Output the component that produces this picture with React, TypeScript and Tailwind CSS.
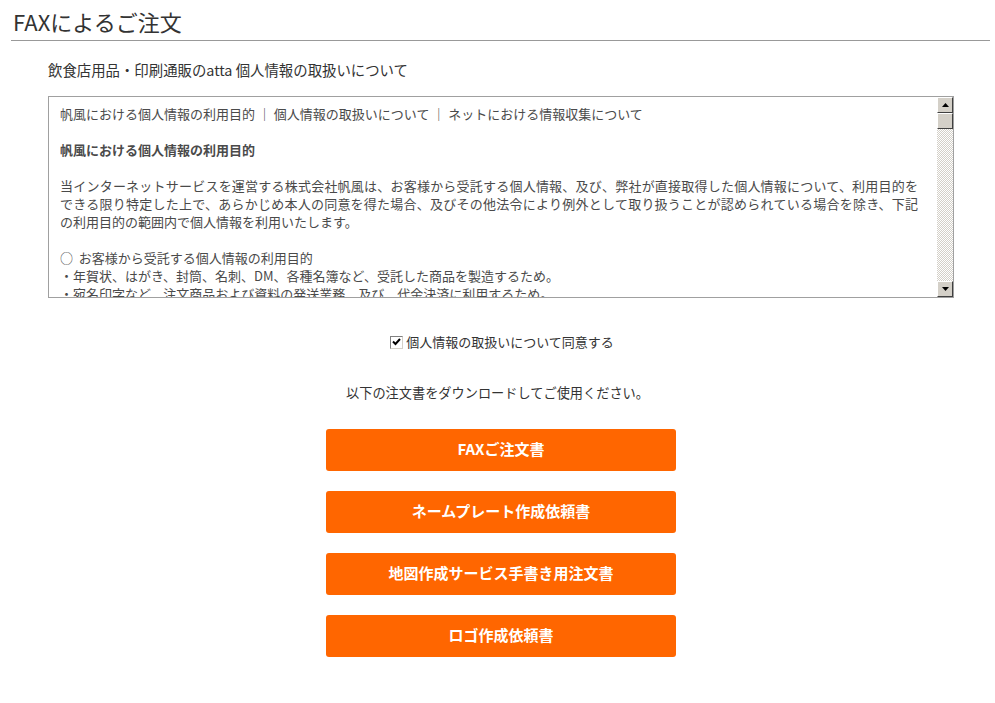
import React from "react";

const font = { fontFamily: '"Noto Sans CJK JP", "Noto Sans", sans-serif' };

function ScrollArrow({ up }: { up: boolean }) {
  return (
    <div className="w-[16px] h-[16px] bg-[#d4d0c8] border border-t-white border-l-white border-r-[#404040] border-b-[#404040] flex items-center justify-center">
      <svg width="7" height="4" viewBox="0 0 7 4">
        {up ? <path d="M3.5 0 L7 4 L0 4 Z" fill="#000" /> : <path d="M0 0 L7 0 L3.5 4 Z" fill="#000" />}
      </svg>
    </div>
  );
}

const buttons = ["FAXご注文書", "ネームプレート作成依頼書", "地図作成サービス手書き用注文書", "ロゴ作成依頼書"];

export default function App() {
  return (
    <div className="w-[995px] h-[703px] bg-white text-[#444]" style={font}>
      <div className="ml-[11px] mr-[5px] border-b border-[#999] pt-[7px] pb-[4px]">
        <h1 className="text-[22px] leading-[29px] pl-[2px] text-[#333] font-normal">FAXによるご注文</h1>
      </div>
      <p className="mt-[20px] ml-[48px] text-[14.4px] leading-[18px] text-[#333]">
        飲食店用品・印刷通販のatta 個人情報の取扱いについて
      </p>
      <div className="mt-[17px] ml-[48px] w-[906px] h-[202px] border border-[#a0a0a0] flex overflow-hidden">
        <div className="flex-1 overflow-hidden pl-[11px] pt-[8px] text-[13px] leading-[18px] text-[#4a4a4a]">
          <div className="whitespace-nowrap">帆風における個人情報の利用目的 ｜ 個人情報の取扱いについて ｜ ネットにおける情報収集について</div>
          <div className="h-[18px]" />
          <div className="font-bold">帆風における個人情報の利用目的</div>
          <div className="h-[18px]" />
          <div className="w-[858px] whitespace-nowrap text-justify [text-align-last:justify]">当インターネットサービスを運営する株式会社帆風は、お客様から受託する個人情報、及び、弊社が直接取得した個人情報について、利用目的を</div>
          <div className="w-[858px] whitespace-nowrap text-justify [text-align-last:justify]">できる限り特定した上で、あらかじめ本人の同意を得た場合、及びその他法令により例外として取り扱うことが認められている場合を除き、下記</div>
          <div className="whitespace-nowrap">の利用目的の範囲内で個人情報を利用いたします。</div>
          <div className="h-[18px]" />
          <div className="whitespace-nowrap">○&nbsp; お客様から受託する個人情報の利用目的</div>
          <div className="whitespace-nowrap">・年賀状、はがき、封筒、名刺、DM、各種名簿など、受託した商品を製造するため。</div>
          <div className="whitespace-nowrap">・宛名印字など、注文商品および資料の発送業務、及び、代金決済に利用するため。</div>
        </div>
        <div className="w-[16px] flex flex-col bg-[repeating-conic-gradient(#d4d0c8_0%_25%,#ffffff_0%_50%)] bg-[length:2px_2px]">
          <ScrollArrow up />
          <div className="w-[16px] h-[16px] bg-[#d4d0c8] border border-t-white border-l-white border-r-[#404040] border-b-[#404040]" />
          <div className="flex-1" />
          <ScrollArrow up={false} />
        </div>
      </div>
      <div className="mt-[35px] flex justify-center pl-[9px] items-center text-[13px] leading-[18px] text-[#333]">
        <span className="w-[13px] h-[13px] border border-t-[#808080] border-l-[#808080] border-b-[#d4d0c8] border-r-[#d4d0c8] bg-white flex items-center justify-center mr-[3px]">
          <svg width="9" height="8" viewBox="0 0 9 8">
            <path d="M1 3.5 L3.5 6 L8 1" stroke="#000" strokeWidth="2" fill="none" />
          </svg>
        </span>
        <span>個人情報の取扱いについて同意する</span>
      </div>
      <p className="mt-[33px] text-center text-[13.2px] leading-[18px] text-[#333]">以下の注文書をダウンロードしてご使用ください。</p>
      <div className="mt-[27px] ml-[326px] w-[350px] flex flex-col gap-[20px]">
        {buttons.map((b) => (
          <div key={b} className="h-[42px] rounded-[3px] bg-[#ff6600] text-white font-bold text-[15px] leading-[20px] pb-[2px] flex items-center justify-center">
            {b}
          </div>
        ))}
      </div>
    </div>
  );
}
